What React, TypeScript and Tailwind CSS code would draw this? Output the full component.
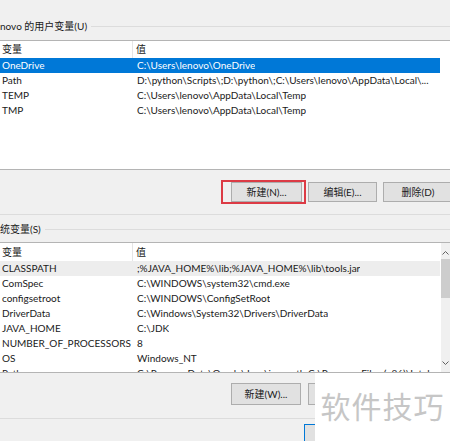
import React from "react";

const userVars: [string, string][] = [
  ["OneDrive", "C:\\Users\\lenovo\\OneDrive"],
  ["Path", "D:\\python\\Scripts\\;D:\\python\\;C:\\Users\\lenovo\\AppData\\Local\\..."],
  ["TEMP", "C:\\Users\\lenovo\\AppData\\Local\\Temp"],
  ["TMP", "C:\\Users\\lenovo\\AppData\\Local\\Temp"],
];

const sysVars: [string, string][] = [
  ["CLASSPATH", ";%JAVA_HOME%\\lib;%JAVA_HOME%\\lib\\tools.jar"],
  ["ComSpec", "C:\\WINDOWS\\system32\\cmd.exe"],
  ["configsetroot", "C:\\WINDOWS\\ConfigSetRoot"],
  ["DriverData", "C:\\Windows\\System32\\Drivers\\DriverData"],
  ["JAVA_HOME", "C:\\JDK"],
  ["NUMBER_OF_PROCESSORS", "8"],
  ["OS", "Windows_NT"],
  ["Path", "C:\\ProgramData\\Oracle\\Java\\javapath;C:\\Program Files (x86)\\Intel"],
];

function Row({ name, value, cls }: { name: string; value: string; cls: string }) {
  return (
    <div className={`flex h-[15px] w-[440px] shrink-0 leading-[15px] whitespace-nowrap ${cls}`}>
      <div className="w-[133px] shrink-0 overflow-hidden pl-[2px]">{name}</div>
      <div className="overflow-hidden pl-[4px]">{value}</div>
    </div>
  );
}

function Header({ h }: { h: string }) {
  return (
    <div className={`flex ${h} shrink-0 items-center whitespace-nowrap`}>
      <div className="flex h-full w-[133px] shrink-0 items-center border-r border-[#e5e5e5] pl-[2px]">变量</div>
      <div className="pl-[3px]">值</div>
    </div>
  );
}

function Chevron({ up }: { up: boolean }) {
  return (
    <svg width="7" height="5" viewBox="0 0 7 5">
      <path d={up ? "M0.5 4.5 L3.5 1.5 L6.5 4.5" : "M0.5 0.5 L3.5 3.5 L6.5 0.5"} fill="none" stroke="#606060" strokeWidth="1" />
    </svg>
  );
}

export default function App() {
  return (
    <div className="relative flex h-[441px] w-[450px] flex-col overflow-hidden bg-[#f0f0f0] text-[10px] text-[#1a1a1a] [font-family:'Lato','Noto_Sans_CJK_SC',sans-serif]">
      {/* user group title */}
      <div className="mt-[18px] flex h-[16px] shrink-0 items-center">
        <span className="pr-[4px] leading-[16px] whitespace-nowrap">novo 的用户变量(U)</span>
        <div className="h-px flex-1 bg-[#dcdcdc]" />
      </div>

      {/* user list */}
      <div className="mt-[6px] flex h-[130px] shrink-0 flex-col overflow-hidden border-y border-[#b4b4b4] bg-white">
        <Header h="h-[17px]" />
        {userVars.map(([n, v], i) => (
          <Row key={n} name={n} value={v} cls={i === 0 ? "bg-[#0078d7] text-white" : ""} />
        ))}
      </div>

      {/* user buttons */}
      <div className="mt-[10px] flex h-[24px] shrink-0 items-start pl-[221px]">
        <div className="flex h-[24px] w-[85px] shrink-0 items-center border-2 border-[#dc3b45] pl-[8px]">
          <div className="flex h-[20px] w-[71px] items-center justify-center border border-[#adadad] bg-[#e1e1e1]">新建(N)...</div>
        </div>
        <div className="mt-[2px] ml-[2px] flex h-[20px] w-[69px] shrink-0 items-center justify-center border border-[#adadad] bg-[#e1e1e1]">编辑(E)...</div>
        <div className="mt-[2px] ml-[6px] flex h-[20px] w-[70px] shrink-0 items-center justify-center border border-[#adadad] bg-[#e1e1e1]">删除(D)</div>
      </div>

      <div className="mt-[10px] h-px shrink-0 bg-[#dcdcdc]" />

      {/* system group title */}
      <div className="mt-[6px] flex h-[16px] shrink-0 items-center">
        <span className="pr-[4px] leading-[16px] whitespace-nowrap">统变量(S)</span>
        <div className="h-px flex-1 bg-[#dcdcdc]" />
      </div>

      {/* system list */}
      <div className="mt-[5px] flex h-[131px] shrink-0 overflow-hidden border-y border-[#b4b4b4] bg-white">
        <div className="flex flex-1 flex-col overflow-hidden">
          <Header h="h-[18px]" />
          {sysVars.map(([n, v], i) => (
            <Row key={n} name={n} value={v} cls={i === 0 ? "bg-[#ededed]" : ""} />
          ))}
        </div>
        <div className="flex w-[9px] shrink-0 flex-col items-center bg-[#f0f0f0]">
          <div className="mt-[4px] flex h-[10px] items-center justify-center">
            <Chevron up />
          </div>
          <div className="mt-[2px] h-[39px] w-full bg-[#cdcdcd]" />
          <div className="flex-1" />
          <div className="mb-[4px] flex h-[10px] items-center justify-center">
            <Chevron up={false} />
          </div>
        </div>
      </div>

      {/* system buttons */}
      <div className="mt-[10px] flex h-[22px] shrink-0 pl-[231px]">
        <div className="flex h-[22px] w-[70px] items-center justify-center border border-[#adadad] bg-[#e1e1e1]">新建(W)...</div>
        <div className="ml-[7px] h-[22px] w-[69px] border border-[#adadad] bg-[#e1e1e1]" />
      </div>

      <div className="mt-[13px] h-px shrink-0 bg-[#dcdcdc]" />

      <div className="mt-[5px] flex shrink-0 pl-[304px]">
        <div className="h-[22px] w-[70px] border border-[#0078d7] bg-[#e1e1e1]" />
      </div>

      {/* watermark overlay */}
      <div className="absolute right-0 bottom-0 flex h-[68px] w-[135px] items-center justify-center bg-white pb-[4px] text-[30px] tracking-[1px] text-[#c6c6c6] [font-family:'Noto_Sans_CJK_SC',sans-serif]">
        软件技巧
      </div>
    </div>
  );
}
